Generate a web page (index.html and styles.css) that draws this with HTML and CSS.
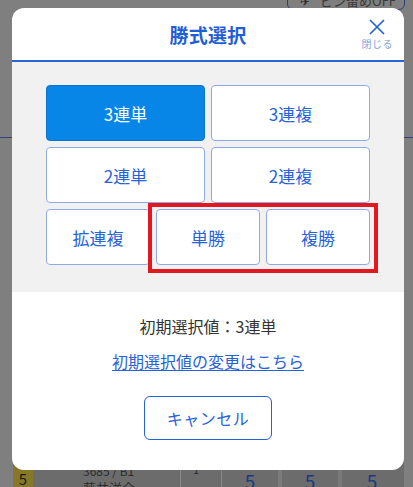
FILE: index.html
```html
<!DOCTYPE html>
<html lang="ja">
<head>
<meta charset="utf-8">
<title>勝式選択</title>
<link rel="stylesheet" href="styles.css">
</head>
<body>
<div class="page">
  <div class="topbar">
    <div class="pin-btn"><span class="pin">✈</span>ピン留めOFF</div>
  </div>
  <div class="band"></div>
  <div class="race-row">
    <div class="cell waku">5</div>
    <div class="cell name"><span class="reg">3685 / B1</span><span class="racer">藤井洋介</span></div>
    <div class="cell small">1</div>
    <div class="cell odds">5</div>
    <div class="cell odds">5</div>
    <div class="cell odds last">5</div>
  </div>
</div>

<div class="modal">
  <div class="modal-head">
    <h1 class="title">勝式選択</h1>
    <button class="close">
      <svg class="close-x" width="16" height="16" viewBox="0 0 16 16"><path d="M1 1 L15 15 M15 1 L1 15" stroke="#1f5fd6" stroke-width="1.6" fill="none"/></svg>
      <span class="close-label">閉じる</span>
    </button>
  </div>
  <div class="modal-body">
    <div class="bet-grid">
      <button class="bet wide selected">3連単</button>
      <button class="bet wide">3連複</button>
      <button class="bet wide">2連単</button>
      <button class="bet wide">2連複</button>
      <button class="bet narrow">拡連複</button>
      <button class="bet narrow">単勝</button>
      <button class="bet narrow">複勝</button>
      <div class="highlight"></div>
    </div>
  </div>
  <div class="modal-foot">
    <p class="initial">初期選択値：3連単</p>
    <a class="change-link" href="#">初期選択値の変更はこちら</a>
    <button class="cancel">キャンセル</button>
  </div>
</div>
</body>
</html>
```

FILE: styles.css
```css
* { box-sizing: border-box; }
html, body {
  margin: 0;
  padding: 0;
}
body {
  width: 413px;
  height: 487px;
  overflow: hidden;
  background: #7f7f7f;
  font-family: "Noto Sans CJK JP", "Noto Sans", sans-serif;
  position: relative;
}

/* background page (dimmed) */
.page {
  height: 487px;
  display: flex;
  flex-direction: column;
  overflow: hidden;
}
.topbar {
  height: 10px;
  display: flex;
  justify-content: flex-end;
  align-items: flex-end;
  padding-right: 8px;
  overflow: hidden;
}
.pin-btn {
  flex: none;
  width: 118px;
  height: 30px;
  border: 1.5px solid #2d3f78;
  border-radius: 6px;
  display: flex;
  align-items: flex-end;
  justify-content: flex-end;
  gap: 10px;
  padding: 0 8px 1px 0;
  color: #3a3a3a;
  font-size: 13px;
  line-height: 14px;
}
.pin { color: #2f2f2f; font-size: 12px; }
.band {
  height: 128px;
  border-bottom: 1px solid #34457a;
}
.race-row {
  margin-top: auto;
  height: 36px;
  margin-left: 13px;
  margin-right: 9px;
  display: flex;
  background: #6c6c6c;
}
.cell {
  border-right: 1px solid #8a8a8a;
  height: 36px;
  overflow: hidden;
  flex: none;
}
.waku {
  width: 20px;
  background: #867828;
  color: #1a1a1a;
  font-size: 15px;
  line-height: 16px;
  padding-top: 20px;
  text-align: center;
  border-right: 0;
}
.name {
  width: 148px;
  display: flex;
  flex-direction: column;
  padding-left: 50px;
  padding-top: 13px;
  color: #2c2c2c;
  font-size: 12px;
  line-height: 14px;
}
.reg { margin-bottom: 3px; }
.racer { font-size: 13px; line-height: 14px; }
.small {
  width: 41px;
  color: #2c2c2c;
  font-size: 11px;
  padding-left: 12px;
  padding-top: 10px;
}
.odds {
  width: 60px;
  color: #183a80;
  font-size: 19px;
  line-height: 20px;
  padding-top: 20px;
  text-align: center;
  border-right: 4px solid #7a7a7a;
}
.odds.last { border-right: 0; }

/* modal */
.modal {
  position: absolute;
  left: 12px;
  top: 8px;
  width: 392px;
  height: 462px;
  background: #fff;
  border-radius: 12px;
  overflow: hidden;
  display: flex;
  flex-direction: column;
}
.modal-head {
  height: 54px;
  border-bottom: 2px solid #2a63d8;
  display: flex;
  align-items: center;
  justify-content: center;
  position: relative;
}
.title {
  margin: 0;
  font-size: 19px;
  font-weight: 700;
  color: #1f5fd6;
  letter-spacing: 0.3px;
  line-height: 24px;
  margin-top: 2px;
}
.close {
  position: absolute;
  right: 11px;
  top: 11px;
  background: none;
  border: 0;
  padding: 0;
  display: flex;
  flex-direction: column;
  align-items: center;
  font-family: inherit;
  cursor: pointer;
}
.close-x { display: block; }
.close-label {
  margin-top: 3px;
  font-size: 10px;
  line-height: 12px;
  color: #7f9fe0;
  letter-spacing: 0.5px;
}

.modal-body {
  background: #f1f1f1;
  height: 230px;
  padding: 23px 34px 0;
}
.bet-grid {
  position: relative;
  display: grid;
  grid-template-columns: repeat(6, 1fr);
  grid-auto-rows: 56px;
  column-gap: 6px;
  row-gap: 6px;
}
.bet {
  font-family: inherit;
  font-size: 17px;
  color: #2762d8;
  background: #fff;
  border: 1px solid #8fa9e8;
  border-radius: 4px;
  padding: 0;
  cursor: pointer;
}
.bet.wide { grid-column: span 3; }
.bet.narrow { grid-column: span 2; }
.bet.selected {
  background: #0886e8;
  border-color: #0a74cc;
  color: #fff;
}
.highlight {
  position: absolute;
  left: 102px;
  top: 118px;
  width: 230px;
  height: 70px;
  border: 4px solid #e3171f;
  pointer-events: none;
}

.modal-foot {
  flex: 1;
  display: flex;
  flex-direction: column;
  align-items: center;
  padding-top: 22px;
}
.initial {
  margin: 0;
  font-size: 16px;
  line-height: 24px;
  color: #333;
}
.change-link {
  margin-top: 11px;
  font-size: 16px;
  line-height: 24px;
  color: #2762d8;
  text-decoration: underline;
  text-underline-offset: 2px;
}
.cancel {
  margin-top: 23px;
  width: 128px;
  height: 44px;
  background: #fff;
  border: 1px solid #2460d6;
  border-radius: 6px;
  font-family: inherit;
  font-size: 16px;
  color: #2762d8;
  letter-spacing: 0.5px;
  cursor: pointer;
}
```
